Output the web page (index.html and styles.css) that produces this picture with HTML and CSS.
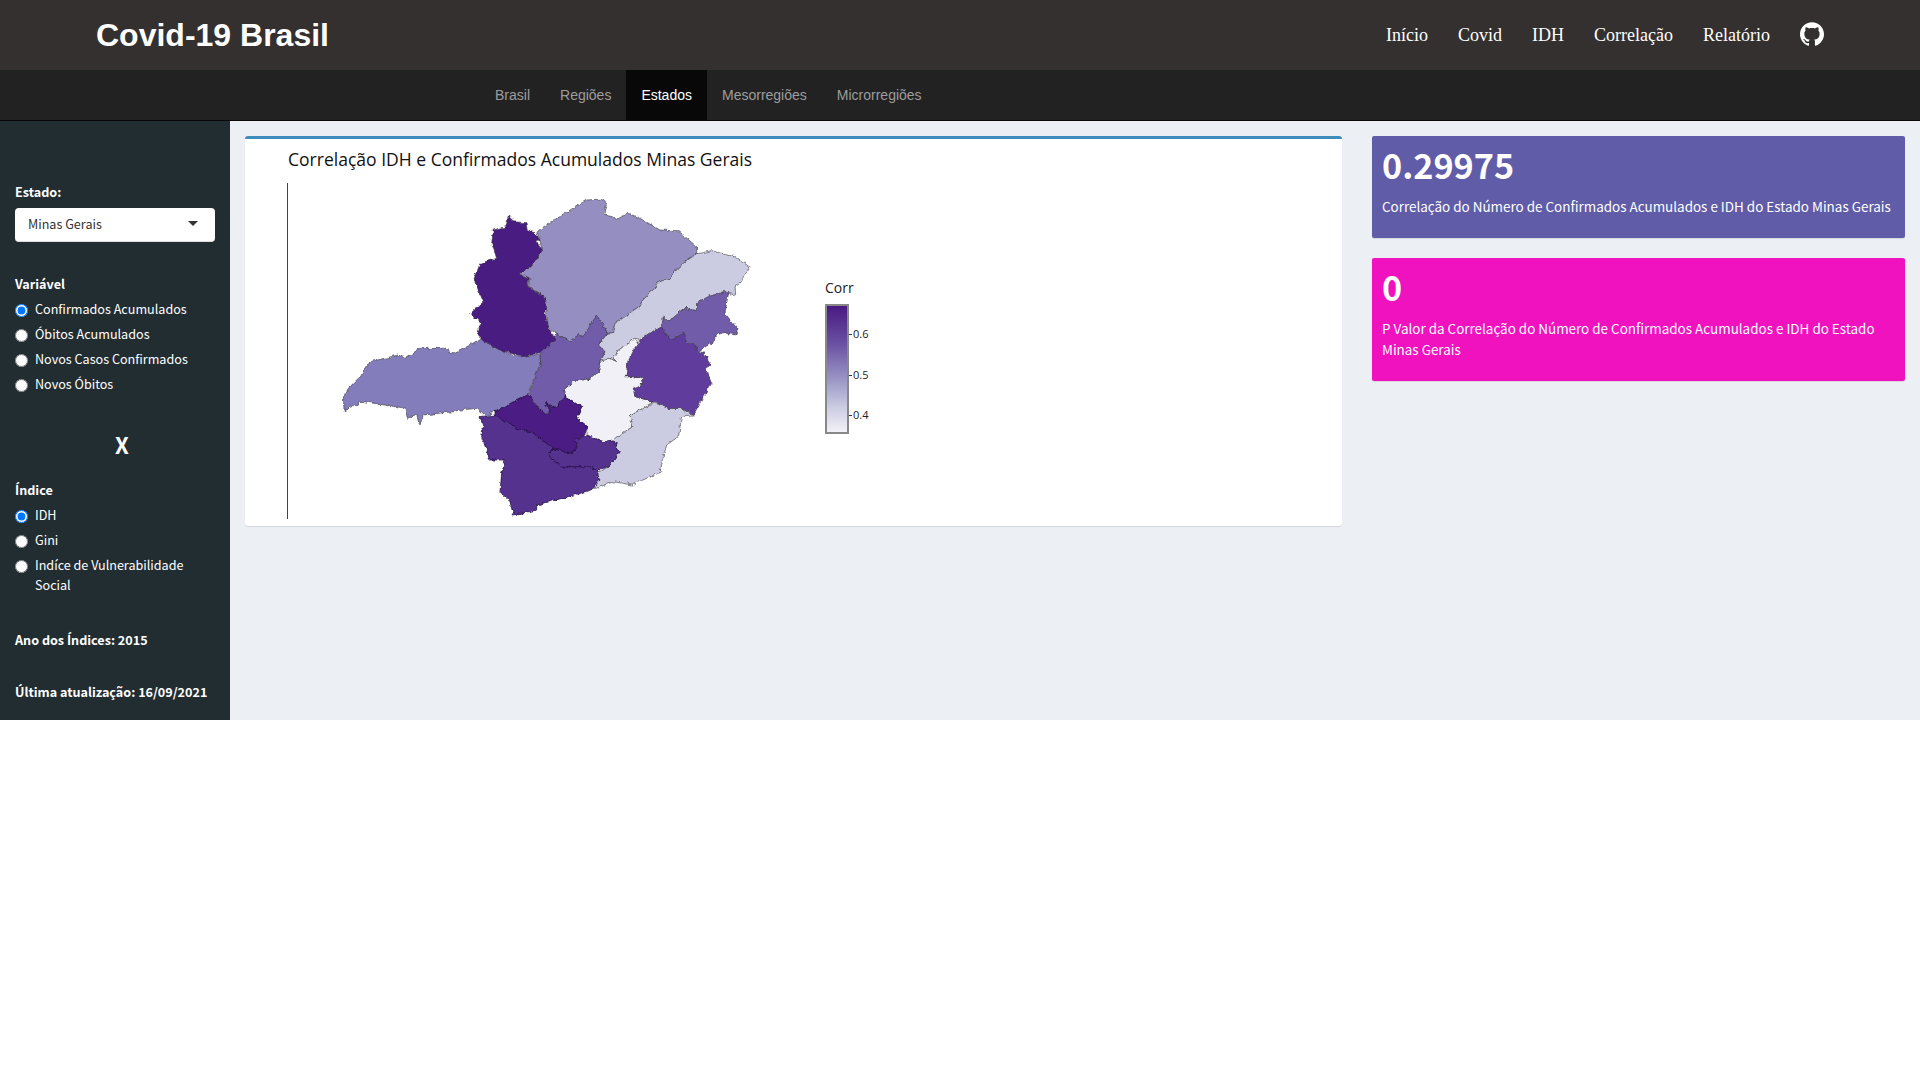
FILE: index.html
```html
<!DOCTYPE html>
<html lang="pt-BR">
<head>
<meta charset="utf-8">
<title>Covid-19 Brasil</title>
<link rel="stylesheet" href="styles.css">
</head>
<body>
<div class="app">
  <header class="topbar">
    <div class="brand">Covid-19 Brasil</div>
    <nav class="mainnav">
      <a>Início</a><a>Covid</a><a>IDH</a><a>Correlação</a><a>Relatório</a>
      <svg class="gh" viewBox="0 0 24 24"><path fill="#fff" d="M12 .297c-6.63 0-12 5.373-12 12 0 5.303 3.438 9.8 8.205 11.385.6.113.82-.258.82-.577 0-.285-.01-1.04-.015-2.04-3.338.724-4.042-1.61-4.042-1.61C4.422 18.07 3.633 17.7 3.633 17.7c-1.087-.744.084-.729.084-.729 1.205.084 1.838 1.236 1.838 1.236 1.07 1.835 2.809 1.305 3.495.998.108-.776.417-1.305.76-1.605-2.665-.3-5.466-1.332-5.466-5.93 0-1.31.465-2.38 1.235-3.22-.135-.303-.54-1.523.105-3.176 0 0 1.005-.322 3.3 1.23.96-.267 1.98-.399 3-.405 1.02.006 2.04.138 3 .405 2.28-1.552 3.285-1.23 3.285-1.23.645 1.653.24 2.873.12 3.176.765.84 1.23 1.91 1.23 3.22 0 4.61-2.805 5.625-5.475 5.92.42.36.81 1.096.81 2.22 0 1.606-.015 2.896-.015 3.286 0 .315.21.69.825.57C20.565 22.092 24 17.592 24 12.297c0-6.627-5.373-12-12-12"/></svg>
    </nav>
  </header>
  <nav class="subnav">
    <a>Brasil</a><a>Regiões</a><a class="active">Estados</a><a>Mesorregiões</a><a>Microrregiões</a>
  </nav>
  <div class="body">
    <aside class="sidebar">
      <div class="label first">Estado:</div>
      <div class="select"><span>Minas Gerais</span><i class="caret"></i></div>
      <div class="label var">Variável</div>
      <label class="radio"><input type="radio" name="v" checked><span>Confirmados Acumulados</span></label>
      <label class="radio"><input type="radio" name="v"><span>Óbitos Acumulados</span></label>
      <label class="radio"><input type="radio" name="v"><span>Novos Casos Confirmados</span></label>
      <label class="radio"><input type="radio" name="v"><span>Novos Óbitos</span></label>
      <div class="x">X</div>
      <div class="label">Índice</div>
      <label class="radio"><input type="radio" name="i" checked><span>IDH</span></label>
      <label class="radio"><input type="radio" name="i"><span>Gini</span></label>
      <label class="radio"><input type="radio" name="i"><span>Indíce de Vulnerabilidade Social</span></label>
      <div class="label ano">Ano dos Índices: 2015</div>
      <div class="label upd">Última atualização: 16/09/2021</div>
    </aside>
    <main class="content">
      <section class="card">
        <h2 class="card-title">Correlação IDH e Confirmados Acumulados Minas Gerais</h2>
        <div class="chart">
          <svg class="map" viewBox="0 0 1380 1020">
            <defs><filter id="rough" x="-5%" y="-5%" width="110%" height="110%"><feTurbulence type="fractalNoise" baseFrequency="0.07" numOctaves="3" seed="4"/><feDisplacementMap in="SourceGraphic" scale="14" xChannelSelector="R" yChannelSelector="G"/></filter></defs>
            <g class="regions" filter="url(#rough)">
              <polygon fill="#948fc0" points="650,155 700,120 750,90 800,60 830,58 860,68 852,100 890,118 925,100 960,115 1020,150 1075,152 1130,200 1130,222 1095,245 1070,270 1050,295 1010,310 1005,325 975,350 960,380 915,410 885,430 878,458 862,460 845,425 830,408 810,435 790,470 775,465 750,483 712,462 685,445 680,400 672,350 625,320 630,295 598,283 625,260 650,235 665,210 660,180"/>
              <polygon fill="#837dbb" points="70,650 85,625 125,585 150,545 235,525 255,535 300,505 370,505 405,520 450,495 490,470 510,495 580,525 610,530 660,522 662,550 628,630 625,645 600,655 525,695 495,708 470,685 420,690 400,695 310,705 300,735 290,705 265,715 258,685 130,665 72,692"/>
              <polygon fill="#cbcbe2" points="1130,222 1175,212 1250,232 1290,262 1260,310 1245,320 1247,347 1215,335 1165,350 1130,370 1130,392 1095,385 1045,425 1030,410 1025,445 995,455 960,480 940,478 895,510 880,535 890,545 870,535 838,545 855,515 835,495 862,460 878,458 885,430 915,410 960,380 975,350 1005,325 1010,310 1050,295 1070,270 1095,245"/>
              <polygon fill="#cbcbe2" points="1000,668 1045,685 1085,685 1120,708 1085,710 1075,770 1040,795 1030,830 1018,870 1025,875 935,915 880,905 815,930 835,900 830,880 870,855 900,815 880,780 890,770 938,740 930,708"/>
              <polygon fill="#f1f0f7" points="940,478 958,490 950,505 925,540 918,590 965,590 972,610 940,625 945,650 1000,665 930,708 938,740 890,770 880,780 850,785 800,765 805,745 770,715 785,680 735,652 730,630 760,605 810,595 840,570 838,545 870,535 890,545 880,535 895,510"/>
              <polygon fill="#6f5ba8" points="712,462 750,483 775,465 790,470 810,435 830,408 845,425 862,460 835,495 855,515 838,545 840,570 810,595 760,605 730,630 735,652 705,685 680,670 690,695 680,705 660,690 628,645 630,630 662,550 660,520"/>
              <polygon fill="#6f5ba8" points="1215,335 1225,340 1215,400 1255,450 1245,465 1210,458 1190,465 1185,480 1150,505 1135,520 1125,495 1100,490 1090,460 1055,480 1030,455 1025,445 1030,410 1045,425 1095,385 1130,392 1130,370 1165,350"/>
              <polygon fill="#613e9c" points="1025,445 1055,480 1090,460 1100,490 1125,495 1135,520 1150,515 1175,555 1155,565 1175,610 1145,660 1120,705 1085,685 1045,685 1000,665 945,650 940,625 972,610 965,590 918,590 925,540 940,510 960,480 995,455"/>
              <polygon fill="#4a1a82" points="565,108 582,125 618,128 622,152 645,158 660,180 648,182 665,210 650,240 630,260 598,283 628,295 622,320 672,350 680,375 675,400 685,445 708,480 660,518 610,530 580,520 540,510 500,490 472,462 482,430 452,400 490,365 462,300 480,250 530,235 515,190 520,150 558,140"/>
              <polygon class="dk" fill="#56308f" points="480,710 525,705 590,745 640,760 700,805 685,825 725,860 810,860 835,870 830,885 840,900 815,930 745,950 650,975 650,990 580,1005 570,965 540,935 545,880 555,840 510,840 485,770 490,740"/>
              <polygon class="dk" fill="#56308f" points="700,805 755,820 770,800 765,780 800,765 850,785 880,780 900,815 870,855 835,870 810,860 725,860 685,825"/>
              <polygon class="dk" fill="#4b1c84" points="625,645 660,690 680,705 690,695 680,670 705,685 735,652 785,680 770,715 805,745 790,768 765,780 770,800 755,820 700,805 640,760 590,745 525,705 525,695 600,655"/>
            </g>
          </svg>
          <div class="legend">
            <div class="legend-title">Corr</div>
            <div class="legend-bar">
              <span class="tick t6">0.6</span>
              <span class="tick t5">0.5</span>
              <span class="tick t4">0.4</span>
            </div>
          </div>
        </div>
      </section>
      <div class="boxes">
        <div class="vbox purple">
          <h3>0.29975</h3>
          <p>Correlação do Número de Confirmados Acumulados e IDH do Estado Minas Gerais</p>
        </div>
        <div class="vbox fuchsia">
          <h3>0</h3>
          <p>P Valor da Correlação do Número de Confirmados Acumulados e IDH do Estado Minas Gerais</p>
        </div>
      </div>
    </main>
  </div>
</div>
</body>
</html>
```
FILE: styles.css
```css
* { box-sizing: border-box; }
html, body { margin: 0; padding: 0; background: #fff; }
body { font-family: "Noto Sans CJK SC", "Source Sans Pro", "Noto Sans", sans-serif; }
.app { width: 1920px; height: 720px; display: flex; flex-direction: column; overflow: hidden; }

.topbar { height: 70px; background: #343030; display: flex; align-items: center; justify-content: space-between; padding: 0 96px 0 96px; flex: none; }
.brand { font: bold 32px/36px "Liberation Sans", Arial, sans-serif; color: #fff; }
.mainnav { display: flex; align-items: center; gap: 30px; }
.mainnav a { font: 18px/24px "Liberation Serif", "Times New Roman", serif; color: #fff; }
.gh { width: 24px; height: 24px; display: block; margin-top: -2px; }

.subnav { height: 51px; background: #222; border-bottom: 1px solid #080808; display: flex; padding-left: 480px; flex: none; }
.subnav a { font: 14px/50px "Liberation Sans", Arial, sans-serif; color: #9d9d9d; padding: 0 15px; height: 50px; }
.subnav a.active { background: #080808; color: #fff; }

.body { flex: 1; display: flex; min-height: 0; background: #ecf0f5; }
.sidebar { width: 230px; flex: none; background: #222d32; color: #fff; padding: 0 15px; font-size: 12.6px; line-height: 20px; }
.label { font-weight: 700; font-size: 12.6px; line-height: 20px; }
.label.first { margin-top: 61px; }
.select { height: 34px; margin-top: 6px; background: #fff; border-radius: 4px; color: #333; padding: 0 13px 2px; display: flex; align-items: center; justify-content: space-between; font-size: 12.6px; line-height: 30px; border-bottom: 1px solid #ddd; }
.caret { width: 0; height: 0; border-left: 5px solid transparent; border-right: 5px solid transparent; border-top: 5px solid #333; margin-right: 4px; }
.label.var { margin-top: 32px; margin-bottom: 5px; }
.radio { display: flex; align-items: flex-start; margin-bottom: 5px; font-size: 12.6px; line-height: 20px; }
.radio input { width: 13px; height: 13px; margin: 5px 7px 0 0; flex: none; }
.x { font-weight: 700; font-size: 22px; line-height: 30px; text-align: center; margin: 35px 0 21px 14px; }
.radio + .label { margin-top: 0; }
.x + .label { margin-bottom: 5px; }
.label.ano { margin-top: 35px; }
.label.upd { margin-top: 32px; }

.content { flex: 1; display: flex; align-items: flex-start; padding: 15px 15px 0; gap: 30px; }
.card { width: 1097px; height: 390px; flex: none; background: #fff; border-top: 3px solid #3c8dbc; border-radius: 3px; box-shadow: 0 1px 1px rgba(0,0,0,.1); }
.card-title { margin: 0; padding: 8px 0 0 43px; font: 400 17.55px/24px "Open Sans", sans-serif; color: #111; }
.chart { display: flex; margin: 12px 0 0 42px; height: 336px; border-left: 1px solid #444; }
.map { width: 460px; height: 340px; margin: -3px 0 0 32px; display: block; flex: none; }
.regions polygon { stroke: #333; stroke-opacity: .7; stroke-width: 2.4; stroke-linejoin: round; }
.regions polygon.dk { stroke: #1c0a3c; stroke-opacity: .9; }
.legend { margin-left: 45px; padding-top: 95px; font-family: "Open Sans", sans-serif; color: #222; }
.legend-title { font-size: 14px; line-height: 20px; margin-bottom: 6px; }
.legend-bar { position: relative; width: 24px; height: 130px; border: 2px solid #888; background: linear-gradient(#4a1a82, #6a51a3 30%, #9e9ac8 60%, #cbcbe2 80%, #f2f0f7); }
.tick { position: absolute; left: 22px; padding-left: 4px; font-size: 11px; line-height: 14px; white-space: nowrap; }
.tick::before { content: ""; position: absolute; left: 0; top: 7px; width: 3px; height: 1px; background: #333; }
.t6 { top: 21px; }
.t5 { top: 62px; }
.t4 { top: 102px; }

.boxes { flex: 1; display: flex; flex-direction: column; gap: 20px; }
.vbox { color: #fff; border-radius: 2px; padding: 10px; box-shadow: 0 1px 1px rgba(0,0,0,.1); }
.vbox h3 { margin: -3px 0 11px; font-size: 34.2px; line-height: 42px; font-weight: 700; }
.vbox p { margin: 0; font-size: 13.45px; line-height: 21px; padding-bottom: 11px; }
.purple { background: #605ca8; }
.fuchsia { background: #f012be; }
```
